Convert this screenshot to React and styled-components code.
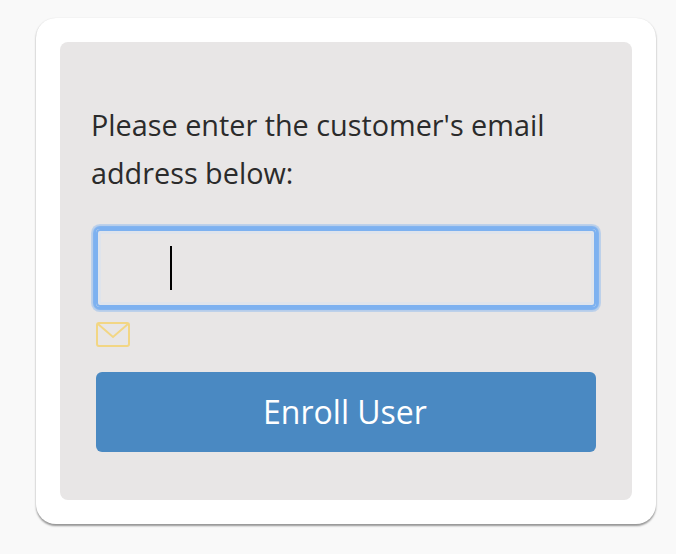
import styled, { createGlobalStyle } from 'styled-components';

const GlobalStyle = createGlobalStyle`
  html, body {
    margin: 0;
    background: #f9f9f9;
  }
  * {
    box-sizing: border-box;
  }
`;

const Page = styled.div`
  width: 676px;
  height: 554px;
  padding: 18px 20px 30px 36px;
  font-family: "Open Sans", sans-serif;
`;

const Card = styled.div`
  height: 506px;
  padding: 24px;
  background: #fff;
  border-radius: 20px;
  box-shadow: 0 1.5px 2px 0 rgba(0, 0, 0, 0.4);
`;

const Panel = styled.div`
  height: 458px;
  padding: 59px 32px 48px;
  background: #e8e6e6;
  border-radius: 8px;
`;

const Prompt = styled.p`
  margin: 0 0 0 -1px;
  font-size: 28.8px;
  line-height: 48px;
  color: #2b2b2b;
`;

const Form = styled.div`
  padding: 32px 4px 0;
`;

const EmailField = styled.div`
  display: flex;
  align-items: center;
  height: 78px;
  padding-left: 74px;
  border-radius: 4px;
  box-shadow:
    0 0 1px 3px #7db1f0,
    0 0 0 5px rgba(125, 177, 240, 0.4),
    inset 0 0 0 2px #7db1f0,
    inset 0 0 0 5px #dfe4ec;
`;

const Caret = styled.span`
  display: block;
  width: 2px;
  height: 44px;
  background: #000;
`;

const MailIcon = styled.svg`
  display: block;
  width: 34px;
  height: 26px;
  margin-top: 15px;
  fill: none;
  stroke: #f2d684;
  stroke-width: 2;
`;

const EnrollButton = styled.button`
  display: block;
  width: 100%;
  height: 80px;
  margin-top: 24px;
  padding: 0 2px 2px 0;
  border: 0;
  border-radius: 6px;
  background: #4a89c2;
  color: #fff;
  font-family: inherit;
  font-size: 32px;
`;

export default function App() {
  return (
    <>
      <GlobalStyle />
      <Page>
        <Card>
          <Panel>
            <Prompt>
              Please enter the customer's email
              <br />
              address below:
            </Prompt>
            <Form>
              <EmailField>
                <Caret />
              </EmailField>
              <MailIcon viewBox="0 0 34 26">
                <rect x="1" y="1" width="32" height="23" rx="2" />
                <path d="M2 2 L17 15 L32 2" />
              </MailIcon>
              <EnrollButton>Enroll User</EnrollButton>
            </Form>
          </Panel>
        </Card>
      </Page>
    </>
  );
}
